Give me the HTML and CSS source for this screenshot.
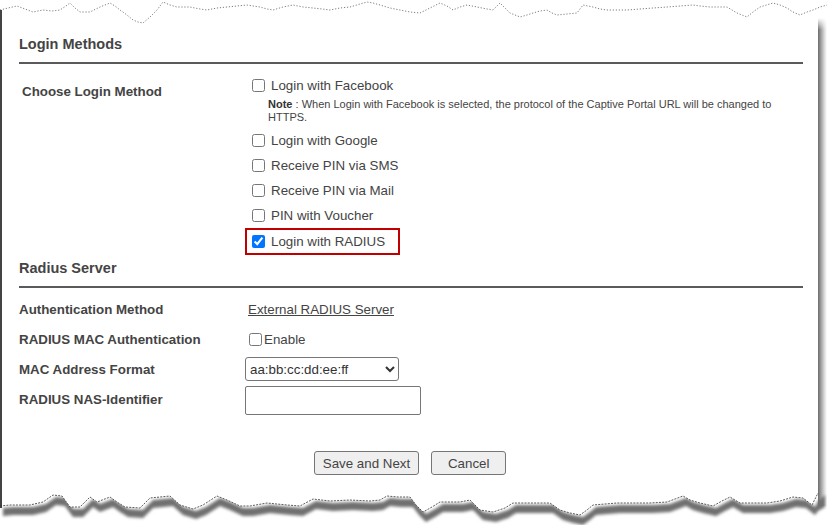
FILE: index.html
```html
<!DOCTYPE html>
<html lang="en">

<head>
    <meta charset="UTF-8" />
    <meta name="viewport" content="width=device-width, initial-scale=1" />
    <title>Captive Portal - Login Methods</title>
    <link rel="stylesheet" href="styles.css">
</head>

<body>
    <div class="shot">
        <div class="sheet">
            <section class="group">
                <h3 class="group-title">Login Methods</h3>
                <div class="login-row">
                    <div class="choose">Choose Login Method</div>
                    <div class="options">
                        <label class="option"><input type="checkbox" /> Login with Facebook</label>
                        <p class="note"><b class="note-tag">Note</b> <span>: When Login with Facebook is selected, the protocol of the Captive Portal URL will be changed to</span><br><span>HTTPS.</span></p>
                        <label class="option"><input type="checkbox" /> Login with Google</label>
                        <label class="option"><input type="checkbox" /> Receive PIN via SMS</label>
                        <label class="option"><input type="checkbox" /> Receive PIN via Mail</label>
                        <label class="option"><input type="checkbox" /> PIN with Voucher</label>
                        <label class="option picked"><input type="checkbox" checked /> Login with RADIUS</label>
                    </div>
                </div>
            </section>

            <section class="group radius">
                <h3 class="group-title">Radius Server</h3>
                <div class="fields">
                    <div class="field">
                        <div class="field-label">Authentication Method</div>
                        <a href="#" class="link">External RADIUS Server</a>
                    </div>
                    <div class="field">
                        <div class="field-label">RADIUS MAC Authentication</div>
                        <label class="enable"><input type="checkbox" />Enable</label>
                    </div>
                    <div class="field">
                        <div class="field-label">MAC Address Format</div>
                        <select class="mac-select">
                            <option>aa:bb:cc:dd:ee:ff</option>
                            <option>aa-bb-cc-dd-ee-ff</option>
                            <option>aabbccddeeff</option>
                        </select>
                    </div>
                    <div class="field">
                        <div class="field-label">RADIUS NAS-Identifier</div>
                        <input type="text" class="nas-input" />
                    </div>
                </div>
            </section>

            <div class="actions">
                <button class="btn">Save and Next</button>
                <button class="btn btn-cancel">Cancel</button>
            </div>
        </div>

        <!-- torn paper edges of the screenshot -->
        <svg class="edge-top" viewBox="0 0 827 30" xmlns="http://www.w3.org/2000/svg">
            <polyline class="tear tear-light" points="0,10 8,8 17,6 25,9 33,12 43,10 52,11 60,10 66,6 70,3 75,8 80,12 90,12 100,7 110,3 115,6 120,10 127,15 133,20 138,22 143,23 150,17 157,10 163,2 170,5 177,7 190,7 200,9 207,10 217,8 227,7 237,6 247,5 253,6 260,7 267,9 273,10 283,7 293,5 303,7 313,8 322,9 330,10 340,8 350,7 360,4 367,2 373,3 380,5 390,8 400,10 410,12 420,13 430,8 440,3 447,6 453,10 460,7 467,5 477,7 487,9 493,10 500,3 505,8 510,13 520,17 527,15 533,13 540,11 547,10 552,13 557,15 567,14 577,13 583,5 593,7 600,9 607,10 617,10 627,10 640,9 653,8 667,7 680,6 693,5 700,6 710,7 727,7 737,13 747,17 753,12 760,7 773,3 780,5 787,8 793,12 800,15 807,12 813,10 820,7 827,5" />
        </svg>
        <div class="edge-right"></div>
        <svg class="edge-bottom" viewBox="0 480 827 45" xmlns="http://www.w3.org/2000/svg">
            <defs>
                <filter id="soft" x="-5%" y="-50%" width="110%" height="200%">
                    <feGaussianBlur stdDeviation="1.6" />
                </filter>
            </defs>
            <polygon class="tear-shadow" filter="url(#soft)" transform="translate(3 2)"
                points="0,506 10,505 30,505 43,502 53,495 62,496 70,507 80,507 90,497 97,502 110,497 117,502 125,507 140,508 150,498 160,497 170,496 180,505 193,509 203,505 217,496 227,500 240,506 250,506 267,503 287,505 300,506 313,499 330,501 350,500 370,501 380,500 387,496 398,497 410,497 416,505 423,512 432,507 440,502 460,502 470,500 480,510 493,512 505,508 513,503 533,503 550,503 560,510 570,513 580,515 587,510 593,505 617,503 650,503 667,502 675,499 683,496 690,500 700,503 713,506 722,501 730,497 735,500 740,503 767,503 780,501 793,497 803,498 812,505 815,499 822,493 822,505 815,509 812,513 803,506 793,505 780,509 767,511 740,511 735,508 730,505 722,509 713,514 700,511 690,508 683,504 675,507 667,510 650,511 617,511 593,513 587,518 580,523 570,521 560,518 550,511 533,511 513,511 505,516 493,520 480,518 470,508 460,510 440,510 432,515 423,520 416,513 410,505 398,505 387,504 380,508 370,509 350,508 330,509 313,507 300,514 287,513 267,511 250,514 240,514 227,508 217,504 203,513 193,517 180,513 170,504 160,505 150,506 140,516 125,515 117,510 110,505 97,510 90,505 80,515 70,515 62,504 53,503 43,510 30,513 10,513 0,514" />
            <polygon class="paper" points="2,480 818,480 818,493 815,499 812,505 803,498 793,497 780,501 767,503 740,503 735,500 730,497 722,501 713,506 700,503 690,500 683,496 675,499 667,502 650,503 617,503 593,505 587,510 580,515 570,513 560,510 550,503 533,503 513,503 505,508 493,512 480,510 470,500 460,502 440,502 432,507 423,512 416,505 410,497 398,497 387,496 380,500 370,501 350,500 330,501 313,499 300,506 287,505 267,503 250,506 240,506 227,500 217,496 203,505 193,509 180,505 170,496 160,497 150,498 140,508 125,507 117,502 110,497 97,502 90,497 80,507 70,507 62,496 53,495 43,502 30,505 10,505 2,506" />
            <polyline class="tear" points="0,506 10,505 30,505 43,502 53,495 62,496 70,507 80,507 90,497 97,502 110,497 117,502 125,507 140,508 150,498 160,497 170,496 180,505 193,509 203,505 217,496 227,500 240,506 250,506 267,503 287,505 300,506 313,499 330,501 350,500 370,501 380,500 387,496 398,497 410,497 416,505 423,512 432,507 440,502 460,502 470,500 480,510 493,512 505,508 513,503 533,503 550,503 560,510 570,513 580,515 587,510 593,505 617,503 650,503 667,502 675,499 683,496 690,500 700,503 713,506 722,501 730,497 735,500 740,503 767,503 780,501 793,497 803,498 812,505 815,499 818,493" />
        </svg>
    </div>
</body>
</html>
```

FILE: styles.css
```css
* {
    box-sizing: border-box;
}

body {
    margin: 0;
    background: #fff;
    font-family: "Liberation Sans", Arial, sans-serif;
    font-size: 13.33px;
    color: #444;
}

.shot {
    position: relative;
    width: 827px;
    height: 525px;
    overflow: hidden;
}

.sheet {
    margin-top: 10px;
    width: 818px;
    height: 498px;
    border-left: 2px solid #444;
    padding: 24px 15px 0 17px;
}

.group-title {
    margin: 0;
    font-size: 14.5px;
    font-weight: bold;
    line-height: 20px;
    padding-bottom: 8px;
    border-bottom: 2px solid #5a5a5a;
}

/* login methods */
.login-row {
    display: flex;
    margin-top: 9px;
}

.choose {
    width: 233px;
    padding: 9px 0 0 3px;
    font-weight: bold;
    line-height: 20px;
}

.options {
    display: flex;
    flex-direction: column;
    align-items: flex-start;
}

.option {
    display: flex;
    align-items: center;
    gap: 6px;
    height: 25px;
}

.option input {
    margin: 0;
    width: 13px;
    height: 13px;
}

.note {
    margin: 0 0 4px 16px;
    font-size: 11px;
    line-height: 13px;
    white-space: nowrap;
}

.note-tag {
    color: #333;
}

.picked {
    width: 155px;
    height: 27px;
    margin-left: -7px;
    padding-left: 5px;
    border: 2px solid #c00000;
}

/* radius server */
.radius {
    margin-top: 3px;
}

.fields {
    margin-top: 6px;
}

.field {
    display: flex;
    align-items: center;
    min-height: 30px;
}

.field-label {
    width: 226px;
    font-weight: bold;
}

.link {
    margin-left: 3px;
    color: #444;
    text-decoration: underline;
}

.enable {
    display: flex;
    align-items: center;
}

.enable input {
    margin: 0 2px 0 4px;
    width: 13px;
    height: 13px;
}

.mac-select {
    width: 154px;
    height: 24px;
    font: inherit;
    color: #333;
    border: 1px solid #767676;
    border-radius: 3px;
    background: #fff;
}

.nas-input {
    width: 176px;
    height: 29px;
    margin-top: 2px;
    border: 1px solid #767676;
    border-radius: 2px;
}

.actions {
    display: flex;
    justify-content: center;
    gap: 12px;
    margin-top: 36px;
    padding-right: 2px;
}

.btn {
    height: 24px;
    padding: 0 8px;
    font: inherit;
    color: #444;
    background: #efefef;
    border: 1px solid #767676;
    border-radius: 3px;
}

.btn-cancel {
    min-width: 75px;
}

/* screenshot decoration */
.edge-top {
    position: absolute;
    left: 0;
    top: 0;
    width: 827px;
    height: 30px;
}

.edge-bottom {
    position: absolute;
    left: 0;
    top: 480px;
    width: 827px;
    height: 45px;
}

.tear {
    fill: none;
    stroke: #333;
    stroke-width: 0.8;
    stroke-dasharray: 2 1.2;
}

.tear-light {
    stroke: #444;
    stroke-width: 0.7;
    stroke-dasharray: 1.2 1.8;
}

.tear-shadow {
    fill: #707070;
}

.paper {
    fill: #fff;
}

.edge-right {
    position: absolute;
    left: 818px;
    top: 18px;
    width: 9px;
    height: 488px;
    background: linear-gradient(to right, #6b6b6b, #9a9a9a 30%, #d9d9d9 70%, #fff);
    -webkit-mask-image: linear-gradient(to bottom, transparent, #000 12px);
    mask-image: linear-gradient(to bottom, transparent, #000 12px);
}
```
